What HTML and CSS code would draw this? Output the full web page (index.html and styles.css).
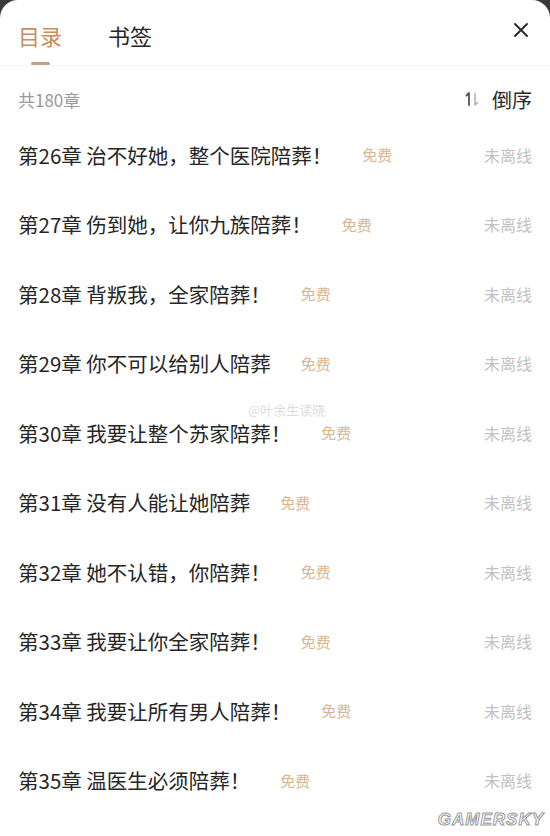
FILE: index.html
```html
<!DOCTYPE html>
<html lang="zh-CN">
    <head>
        <meta charset="UTF-8" />
        <meta name="viewport" content="width=device-width, initial-scale=1.0" />
        <title>目录</title>
        <link rel="stylesheet" href="styles.css">
    </head>
    <body>
        <div class="sheet">
            <div class="header">
                <div class="tabs">
                    <div class="tab active">
                        <span>目录</span>
                        <i class="bar"></i>
                    </div>
                    <div class="tab">
                        <span>书签</span>
                    </div>
                </div>
                <svg class="close" width="16" height="16" viewBox="0 0 16 16">
                    <path d="M2 2 L14 14 M14 2 L2 14" stroke="#2b2b2b" stroke-width="2" stroke-linecap="round" />
                </svg>
            </div>

            <div class="summary">
                <span class="count">共180章</span>
                <span class="sort">
                    <svg width="16" height="16" viewBox="0 0 16 16">
                        <!-- 上箭头深一点，下箭头浅一点 -->
                        <path d="M5 14 V2 M2.5 4.5 L5 2" stroke="#555" stroke-width="1.8" fill="none" stroke-linecap="round" />
                        <path d="M11 2 V14 M11 14 L13.5 11.5" stroke="#aaa" stroke-width="1.4" fill="none" stroke-linecap="round" />
                    </svg>
                    倒序
                </span>
            </div>

            <ul class="chapters">
                <li class="chapter">
                    <span class="name">第26章 治不好她，整个医院陪葬！</span>
                    <span class="free">免费</span>
                    <span class="state">未离线</span>
                </li>
                <li class="chapter">
                    <span class="name">第27章 伤到她，让你九族陪葬！</span>
                    <span class="free">免费</span>
                    <span class="state">未离线</span>
                </li>
                <li class="chapter">
                    <span class="name">第28章 背叛我，全家陪葬！</span>
                    <span class="free">免费</span>
                    <span class="state">未离线</span>
                </li>
                <li class="chapter">
                    <span class="name">第29章 你不可以给别人陪葬</span>
                    <span class="free">免费</span>
                    <span class="state">未离线</span>
                </li>
                <li class="chapter">
                    <span class="name">第30章 我要让整个苏家陪葬！</span>
                    <span class="free">免费</span>
                    <span class="state">未离线</span>
                    <span class="mark">@叶余生读晓</span>
                </li>
                <li class="chapter">
                    <span class="name">第31章 没有人能让她陪葬</span>
                    <span class="free">免费</span>
                    <span class="state">未离线</span>
                </li>
                <li class="chapter">
                    <span class="name">第32章 她不认错，你陪葬！</span>
                    <span class="free">免费</span>
                    <span class="state">未离线</span>
                </li>
                <li class="chapter">
                    <span class="name">第33章 我要让你全家陪葬！</span>
                    <span class="free">免费</span>
                    <span class="state">未离线</span>
                </li>
                <li class="chapter">
                    <span class="name">第34章 我要让所有男人陪葬！</span>
                    <span class="free">免费</span>
                    <span class="state">未离线</span>
                </li>
                <li class="chapter">
                    <span class="name">第35章 温医生必须陪葬！</span>
                    <span class="free">免费</span>
                    <span class="state">未离线</span>
                </li>
            </ul>

            <div class="logo">GAMERSKY</div>
        </div>
    </body>
</html>
```

FILE: styles.css
```css
html,
body {
    margin: 0;
    height: 100%;
    background: #3a3a3a;
    overflow: hidden;
}

body {
    font-family: "Noto Sans CJK SC", "Noto Sans", sans-serif;
}

.sheet {
    position: relative;
    height: 100%;
    background: #fff;
    border-radius: 18px 18px 0 0;
    display: flex;
    flex-direction: column;
}

.header {
    height: 66px;
    padding: 0 21px 0 18px;
    display: flex;
    justify-content: space-between;
    align-items: flex-start;
    border-bottom: 1px solid #f4f4f4;
    box-sizing: border-box;
}

.tabs {
    display: flex;
    gap: 46px;
    padding-top: 20px;
}

.tab {
    display: flex;
    flex-direction: column;
    align-items: center;
    font-size: 22px;
    line-height: 30px;
    color: #262626;
}

.tab.active {
    color: #cc8c60;
}

.bar {
    width: 19px;
    height: 3px;
    margin-top: 12px;
    border-radius: 2px;
    background: #b9a28d;
}

.close {
    margin-top: 22px;
}

.summary {
    height: 54px;
    padding: 12px 18px 0;
    display: flex;
    justify-content: space-between;
    align-items: center;
    box-sizing: border-box;
}

.count {
    font-size: 17px;
    color: #9a9a9a;
}

.sort {
    display: flex;
    align-items: center;
    gap: 12px;
    font-size: 20px;
    color: #2b2b2b;
}

.chapters {
    list-style: none;
    margin: 0;
    padding: 0;
}

.chapter {
    position: relative;
    height: 69.5px;
    padding: 0 18px;
    display: flex;
    align-items: center;
}

.name {
    font-size: 20.5px;
    color: #262626;
}

.free {
    margin-left: 30px;
    font-size: 15px;
    color: #dbb590;
}

.state {
    margin-left: auto;
    font-size: 16px;
    color: #c2c2c2;
}

/* 微博水印，压在文字上方 */
.mark {
    position: absolute;
    left: 248px;
    top: 5px;
    font-size: 13px;
    line-height: 14px;
    color: #d4d4d4;
    opacity: 0.8;
}

.logo {
    position: absolute;
    right: 6px;
    bottom: 6px;
    font-family: "Liberation Sans", Arial, sans-serif;
    font-size: 17px;
    font-weight: bold;
    font-style: italic;
    letter-spacing: 1px;
    color: #fff;
    -webkit-text-stroke: 1px #9a9a9a;
}
```
